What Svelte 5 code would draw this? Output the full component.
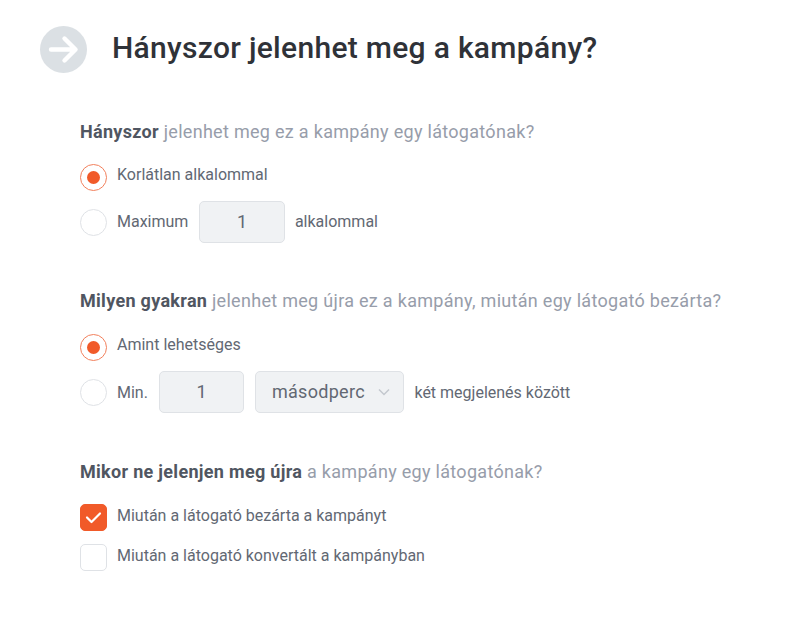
<script lang="ts">
  let timeValue = '1';
</script>

<div class="page">
  <header class="title-row">
    <span class="step-icon">
      <svg width="47" height="47" viewBox="0 0 47 47" fill="none">
        <path d="M11 23.5h24.5M24.5 12.5l11 11-11 11" stroke="#fff" stroke-width="4.4" stroke-linecap="round" stroke-linejoin="round" />
      </svg>
    </span>
    <h1>Hányszor jelenhet meg a kampány?</h1>
  </header>

  <section class="first">
    <h2><b>Hányszor</b> jelenhet meg ez a kampány egy látogatónak?</h2>
    <div class="option top">
      <span class="radio checked"></span>
      <span>Korlátlan alkalommal</span>
    </div>
    <div class="option field raised">
      <span class="radio"></span>
      <span>Maximum</span>
      <span class="input">1</span>
      <span class="unit">alkalommal</span>
    </div>
  </section>

  <section class="second">
    <h2><b>Milyen gyakran</b> jelenhet meg újra ez a kampány, miután egy látogató bezárta?</h2>
    <div class="option top">
      <span class="radio checked"></span>
      <span>Amint lehetséges</span>
    </div>
    <div class="option field">
      <span class="radio"></span>
      <span>Min.</span>
      <span class="input">{timeValue}</span>
      <span class="select">
        másodperc
        <svg width="12" height="8" viewBox="0 0 12 8" fill="none">
          <path d="M1 1.5l5 5 5-5" stroke="#c3c8ce" stroke-width="1.5" />
        </svg>
      </span>
      <span class="unit">két megjelenés között</span>
    </div>
  </section>

  <section class="third">
    <h2><b>Mikor ne jelenjen meg újra</b> a kampány egy látogatónak?</h2>
    <div class="option check-one">
      <span class="check checked">
        <svg width="17" height="13" viewBox="0 0 17 13" fill="none">
          <path d="M2 6.5l4.5 4.5L15 2.5" stroke="#fff" stroke-width="2.2" stroke-linecap="round" stroke-linejoin="round" />
        </svg>
      </span>
      <span>Miután a látogató bezárta a kampányt</span>
    </div>
    <div class="option check-two">
      <span class="check"></span>
      <span>Miután a látogató konvertált a kampányban</span>
    </div>
  </section>
</div>

<style>
  :global(body) {
    background: #fff;
  }
  .page {
    font-family: Roboto, sans-serif;
    color: #626873;
    font-size: 16px;
    height: 617px;
    overflow: hidden;
    box-sizing: border-box;
    padding-top: 26px;
  }
  .title-row {
    display: flex;
    align-items: flex-start;
    gap: 25px;
    padding-left: 40px;
    height: 47px;
  }
  .step-icon {
    width: 47px;
    height: 47px;
    border-radius: 50%;
    background: #dbe0e4;
    display: flex;
  }
  h1 {
    margin: 0;
    font-size: 30px;
    line-height: 43px;
    font-weight: 500;
    letter-spacing: 0.3px;
    color: #2f3238;
  }
  section {
    padding-left: 80px;
  }
  .first {
    margin-top: 49px;
  }
  .second {
    margin-top: 48px;
  }
  .second .top {
    margin-top: 23px;
  }
  .third {
    margin-top: 49px;
  }
  h2 {
    margin: 0;
    font-size: 18px;
    line-height: 20px;
    font-weight: 400;
    letter-spacing: 0.3px;
    color: #979daa;
  }
  h2 b {
    font-weight: 700;
    color: #505661;
  }
  .option {
    display: flex;
    align-items: center;
    gap: 11px;
  }
  .top {
    margin-top: 22px;
    height: 27px;
    align-items: flex-start;
    line-height: 21px;
  }
  .field {
    margin-top: 10px;
    height: 42px;
  }
  .raised {
    line-height: 41px;
    align-items: flex-start;
  }
  .raised .radio {
    margin-top: 8px;
  }
  .unit {
    margin-left: -1px;
  }
  .check-one {
    margin-top: 22px;
    height: 27px;
    align-items: flex-start;
    line-height: 24px;
  }
  .check-two {
    margin-top: 13px;
    height: 27px;
    align-items: flex-start;
    line-height: 24px;
  }
  .radio {
    width: 27px;
    height: 27px;
    margin-right: -1px;
    box-sizing: border-box;
    border: 1px solid #dfe2e6;
    border-radius: 50%;
    background: #fff;
    display: flex;
    align-items: center;
    justify-content: center;
  }
  .radio.checked {
    border-color: #f2805c;
  }
  .radio.checked::after {
    content: '';
    width: 13px;
    height: 13px;
    border-radius: 50%;
    background: #f15a29;
  }
  .input,
  .select {
    height: 42px;
    box-sizing: border-box;
    border: 1px solid #dfe2e6;
    border-radius: 5px;
    background: #f0f2f4;
    font-size: 18px;
    letter-spacing: 0.3px;
    line-height: 1;
    display: flex;
    align-items: center;
  }
  .input {
    width: 85.5px;
    justify-content: center;
  }
  .select {
    width: 149px;
    padding: 0 13px 0 15.5px;
    justify-content: space-between;
  }
  .check {
    width: 27px;
    height: 27px;
    margin-right: -1px;
    box-sizing: border-box;
    border: 1px solid #dfe2e6;
    border-radius: 5px;
    display: flex;
    align-items: center;
    justify-content: center;
  }
  .check.checked {
    background: #f15a29;
    border-color: #f15a29;
  }
</style>
